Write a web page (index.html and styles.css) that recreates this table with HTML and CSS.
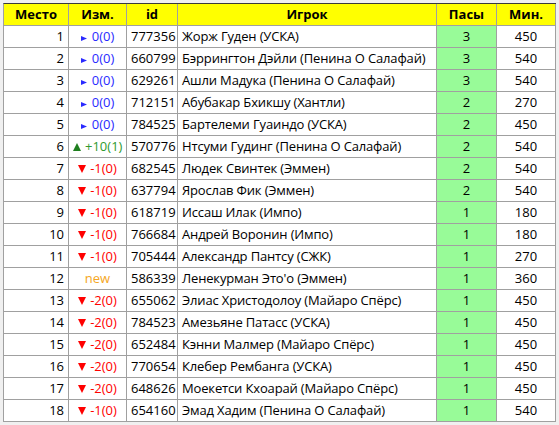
FILE: index.html
```html
<!DOCTYPE html>
<html lang="ru">
<head>
<meta charset="utf-8">
<title>Пасы</title>
<link rel="stylesheet" href="styles.css">
</head>
<body>
<table class="grid">
  <colgroup>
    <col class="c-place"><col class="c-chg"><col class="c-id"><col class="c-name"><col class="c-pass"><col class="c-min">
  </colgroup>
  <thead>
    <tr><th>Место</th><th>Изм.</th><th>id</th><th>Игрок</th><th>Пасы</th><th>Мин.</th></tr>
  </thead>
  <tbody id="rows"></tbody>
</table>
<script src="app.js"></script>
</body>
</html>
```
FILE: styles.css
```css
html, body { margin: 0; padding: 0; }
body {
  background: #f0f0f0;
  padding: 3px 0 0 3px;
  font-family: "Open Sans", "Liberation Sans", sans-serif;
  font-size: 13px;
  color: #000;
}
.grid {
  border-collapse: separate;
  border-spacing: 0;
  table-layout: fixed;
  width: 553px;
  border-left: 1px solid #a0a0a0;
  border-top: 1px solid #3a3a3a;
  background: #fff;
}
.c-place { width: 65px; }
.c-chg { width: 58px; }
.c-id { width: 51px; }
.c-name { width: 259px; }
.c-pass { width: 60px; }
.c-min { width: 59px; }
.grid th, .grid td {
  box-sizing: border-box;
  height: 22px;
  padding: 0 4px 2px 4px;
  border-right: 1px solid #a0a0a0;
  border-bottom: 1px solid #a0a0a0;
  line-height: 18px;
  vertical-align: bottom;
  white-space: nowrap;
  overflow: hidden;
}
.grid th {
  background: #ffff00;
  font-weight: 700;
  text-align: center;
}
.place { text-align: right; padding-right: 5px; }
.chg { text-align: center; padding: 0 0 2px 0; }
.name { padding-left: 4px; letter-spacing: -0.15px; }
.pass { background: #98fb98; text-align: center; }
.min { text-align: center; }
.same { color: #2a2aff; }
.up { color: #2f9a2f; }
.down { color: #ff0000; }
.new { color: #f5a623; }
.tri { display: inline-block; vertical-align: baseline; margin-right: 4px; }
.tri-same { width: 6px; height: 5px; margin-right: 5px; }
.tri-ud { width: 8px; height: 8px; }
```
FILE: app.js
```js
const data = [
  [1, "same", "0(0)", 777356, "Жорж Гуден (УСКА)", 3, 450],
  [2, "same", "0(0)", 660799, "Бэррингтон Дэйли (Пенина О Салафай)", 3, 540],
  [3, "same", "0(0)", 629261, "Ашли Мадука (Пенина О Салафай)", 3, 540],
  [4, "same", "0(0)", 712151, "Абубакар Бхикшу (Хантли)", 2, 270],
  [5, "same", "0(0)", 784525, "Бартелеми Гуаиндо (УСКА)", 2, 450],
  [6, "up", "+10(1)", 570776, "Нтсуми Гудинг (Пенина О Салафай)", 2, 540],
  [7, "down", "-1(0)", 682545, "Людек Свинтек (Эммен)", 2, 540],
  [8, "down", "-1(0)", 637794, "Ярослав Фик (Эммен)", 2, 540],
  [9, "down", "-1(0)", 618719, "Иссаш Илак (Импо)", 1, 180],
  [10, "down", "-1(0)", 766684, "Андрей Воронин (Импо)", 1, 180],
  [11, "down", "-1(0)", 705444, "Александр Пантсу (СЖК)", 1, 270],
  [12, "new", "new", 586339, "Ленекурман Это'о (Эммен)", 1, 360],
  [13, "down", "-2(0)", 655062, "Элиас Христодолоу (Майаро Спёрс)", 1, 450],
  [14, "down", "-2(0)", 784523, "Амезьяне Патасс (УСКА)", 1, 450],
  [15, "down", "-2(0)", 652484, "Кэнни Малмер (Майаро Спёрс)", 1, 450],
  [16, "down", "-2(0)", 770654, "Клебер Рембанга (УСКА)", 1, 450],
  [17, "down", "-2(0)", 648626, "Моекетси Кхоарай (Майаро Спёрс)", 1, 450],
  [18, "down", "-1(0)", 654160, "Эмад Хадим (Пенина О Салафай)", 1, 540]
];

const icons = {
  same: '<svg class="tri tri-same" viewBox="0 0 6 5"><polygon points="0,0 6,2.5 0,5" fill="#2a2aff"/></svg>',
  up: '<svg class="tri tri-ud" viewBox="0 0 8 8"><polygon points="4,0 8,8 0,8" fill="#1f7f1f"/></svg>',
  down: '<svg class="tri tri-ud" viewBox="0 0 8 8"><polygon points="0,0 8,0 4,8" fill="#ff0000"/></svg>',
  new: ''
};

const tbody = document.getElementById("rows");
tbody.innerHTML = data.map(([place, kind, chg, id, name, pass, min]) =>
  `<tr><td class="place">${place}</td>` +
  `<td class="chg ${kind}">${icons[kind]}${chg}</td>` +
  `<td class="id">${id}</td>` +
  `<td class="name">${name}</td>` +
  `<td class="pass">${pass}</td>` +
  `<td class="min">${min}</td></tr>`
).join("");
```
